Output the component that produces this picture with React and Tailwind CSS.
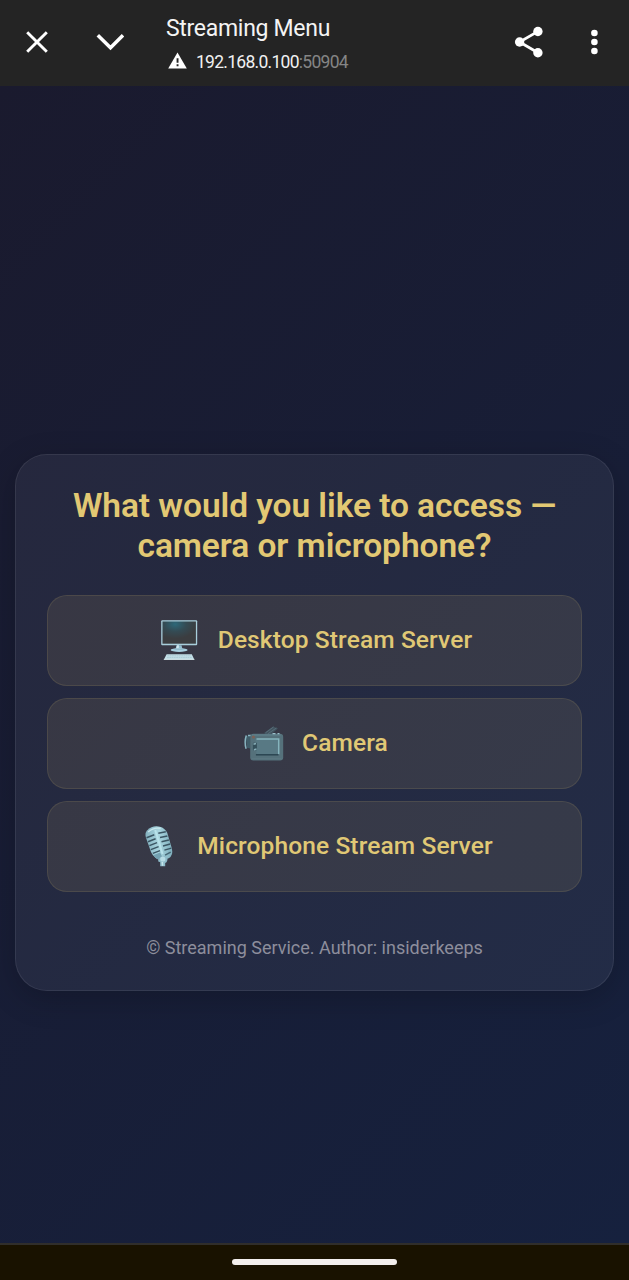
import React from "react";

function CloseIcon() {
  return (
    <svg width="22" height="22" viewBox="0 0 22 22" fill="none" stroke="#fff" strokeWidth="2.9">
      <path d="M1.2 1.2 20.8 20.8M20.8 1.2 1.2 20.8" />
    </svg>
  );
}

function ChevronIcon() {
  return (
    <svg width="28" height="18" viewBox="0 0 28 18" fill="none" stroke="#fff" strokeWidth="3.5">
      <path d="M1.8 2.2 14.5 14.7 27 2.2" />
    </svg>
  );
}

function WarningIcon() {
  return (
    <svg className="mb-[3px]" width="19" height="17" viewBox="0 0 19 17">
      <path d="M9.5 0.5 18.8 16.5H.2Z" fill="#fff" />
      <path d="M8.6 6.3h1.9v4.4H8.6zM8.6 12.2h1.9v2H8.6z" fill="#242424" />
    </svg>
  );
}

function ShareIcon() {
  return (
    <svg width="30" height="32" viewBox="0 0 30 32" fill="#fff">
      <path d="M24 5.4 5.6 16 24 26.7" fill="none" stroke="#fff" strokeWidth="2.8" />
      <circle cx="23.9" cy="5.5" r="4.7" />
      <circle cx="5.6" cy="16" r="4.7" />
      <circle cx="23.9" cy="26.7" r="4.7" />
    </svg>
  );
}

function MoreIcon() {
  return (
    <svg width="8" height="26" viewBox="0 0 8 26" fill="#fff">
      <circle cx="4.4" cy="4" r="3.3" />
      <circle cx="4.4" cy="13" r="3.3" />
      <circle cx="4.4" cy="22" r="3.3" />
    </svg>
  );
}

function DesktopIcon() {
  return (
    <svg className="mb-[1px]" width="42" height="42" viewBox="0 0 42 42">
      <defs>
        <radialGradient id="screen" cx="0.38" cy="0.12" r="0.65">
          <stop offset="0" stopColor="#2d6879" />
          <stop offset="0.5" stopColor="#344b54" />
          <stop offset="1" stopColor="#3b3d40" />
        </radialGradient>
      </defs>
      <rect x="2.2" y="1.2" width="36" height="25" rx="1" fill="#a8cedb" />
      <rect x="3.5" y="2.5" width="33.4" height="22.2" fill="url(#screen)" />
      <path d="M17.5 26.2h5l.8 3.3h-6.6z" fill="#92bed0" />
      <path d="M18 26.2h2l-.3 3.3h-2.4z" fill="#d2e9f0" />
      <ellipse cx="20.1" cy="31" rx="8.5" ry="1.9" fill="#a7cfdf" />
      <path d="M14 30.7q6-1.8 12 0z" fill="#8ab5c6" />
      <path d="M7.6 35.2h25.2l2.6 5.5H4.8z" fill="#c3dfe7" />
      <path d="M8.4 36.8h23.8M8 38.6h25" stroke="#a4c4cf" strokeWidth=".7" strokeDasharray="1.8 .5" />
      <path d="M4.8 40.4h30.6" stroke="#dcebef" strokeWidth=".8" />
    </svg>
  );
}

function CameraIcon() {
  return (
    <svg className="mt-[1px]" width="42" height="42" viewBox="0 0 42 42">
      <path d="m21 10 9-6.5 5 2-9 7.4z" fill="#42535f" />
      <path d="m22.5 9.8 8-5.8M25 10.7l8.4-5.7" stroke="#566d78" strokeWidth="1" />
      <path d="M2.5 12.8h4.9V25.5L4 24.8z" fill="#405d69" />
      <path d="M3.3 12.4q-2.2 6.4-.2 13.4M5 12.4h3" stroke="#88b4c0" strokeWidth="1.5" fill="none" />
      <rect x="7.2" y="10.8" width="33" height="26.6" rx="3.2" fill="#55717b" />
      <path d="M9 12h28.6" stroke="#628490" />
      <path d="M12.5 16h22.6v15.5H13.5z" fill="#587984" />
      <path d="M13.5 15.9h22.2v15.3" fill="none" stroke="#85b4bd" strokeWidth="1.5" />
      <path d="M35.5 31.8H12.9" fill="none" stroke="#28424e" strokeWidth="1.4" />
      <path d="M9.9 19.8h4v7.4h-4z" fill="#34505b" />
      <path d="m10.5 21.2 2.5-.8M10.9 26.8l2.6-.7" stroke="#88aeb7" strokeWidth="1.6" />
      <circle cx="10.5" cy="14" r="1.6" fill="#7c6258" />
      <path d="M29.5 10.6h3M34.5 10.6h2" stroke="#9bc1cb" strokeWidth="1.4" />
      <path d="M8.5 35.8h30" stroke="#5d7a84" />
    </svg>
  );
}

function MicrophoneIcon() {
  return (
    <svg className="mb-[1px]" width="42" height="42" viewBox="0 0 42 42">
      <defs>
        <linearGradient id="metal" x1="0" x2="1">
          <stop offset="0" stopColor="#83b1bf" />
          <stop offset="0.5" stopColor="#a9d5df" />
          <stop offset="1" stopColor="#7eaebc" />
        </linearGradient>
      </defs>
      <g transform="translate(0.8 0)">
        <path d="M8.2 5.4Q13.5.2 21 1.7q5.2 1.2 7.5 6.3l4.6 15.5q1.6 7-3.2 9.8l-6.5 2.2Q15.3 34 12.2 27L7.1 12.5Q5.8 8 8.2 5.4z" fill="url(#metal)" />
        <path d="m7.7 12.8 7.8-3.1M9.2 16.8l7.6-3M10.6 20.6l7.6-3M12 24.6l7.8-3M14 28.4l7.2-2.8M19.5 8.3l7.5-1.6M21.2 12.6l7.4-1.7M22.7 16.7l7.4-1.8M24.2 20.9l7.2-1.9M25.6 25.1l7-2" stroke="#3a5563" strokeWidth="1.5" />
        <path d="m16.4 5 7.4 24" stroke="#b8e2ea" strokeWidth="2" />
        <path d="M9.4 7.1q5.4-4.9 12.4-3.7" fill="none" stroke="#c8e7ed" strokeWidth="1.4" />
        <path d="m14.5 30.2 6.8-2.6 3 6.2-2.7 1.3q-4.5-1-7.1-4.9z" fill="#74a2b2" />
        <path d="m26.3 30.2 5.6-3" stroke="#446573" strokeWidth="1.5" />
        <path d="M19.8 34.3q4-5.5 8-2.5 1.8 2.6-.1 5.5l-1.3.8v3.2h-5v-4l-2.2-1z" fill="#8ebbc9" />
        <circle cx="24" cy="34" r="2.6" fill="#b7dce5" />
        <path d="m23.5 37 .3 3.8" stroke="#c5e5eb" strokeWidth="1.5" />
      </g>
    </svg>
  );
}

function MenuButton({ icon, label }) {
  return (
    <button className="flex h-[91px] w-full items-center justify-center gap-[17px] rounded-[20px] border border-[#e2c873]/12 bg-[#e2c873]/10 pl-[2px] font-['Roboto',sans-serif] text-[24.5px] font-medium text-[#e0c875]">
      <span className="shrink-0">{icon}</span>
      <span className="whitespace-nowrap pb-[1px] tracking-[0.12px]">{label}</span>
    </button>
  );
}

export default function App() {
  return (
    <div className="flex h-[1280px] w-full flex-col overflow-hidden font-['Roboto',sans-serif]">
      <header className="flex h-[86px] shrink-0 items-start bg-[#242424] pl-[26px] pr-[31px]">
        <div className="flex h-[84px] items-center gap-12">
          <CloseIcon />
          <ChevronIcon />
        </div>
        <div className="ml-[42px] flex flex-col pt-[15px]">
          <h1 className="whitespace-nowrap text-[23px] leading-7 tracking-[-0.3px] text-[#f4f4f4]">Streaming Menu</h1>
          <div className="mt-[7px] flex items-center gap-[9px] pl-[2px]">
            <WarningIcon />
            <p className="whitespace-nowrap text-[17.5px] leading-6 tracking-[-0.72px] text-[#f1f1f1]">
              192.168.0.100<span className="text-[#858585]">:50904</span>
            </p>
          </div>
        </div>
        <div className="ml-auto flex h-[84px] items-center gap-[46px]">
          <ShareIcon />
          <MoreIcon />
        </div>
      </header>
      <main className="flex flex-1 flex-col items-center bg-linear-[135deg,#1a1a2e,#16213e] px-[15px] pt-[368px]">
        <section className="flex h-[537px] w-full flex-col items-center rounded-[32px] border border-white/8 bg-[#f0f0ff]/6 px-[31px] pt-[31px] shadow-[0_8px_32px_rgba(0,0,0,0.2)]">
          <h2 className="whitespace-nowrap text-center text-[33.5px] font-semibold leading-[39.5px] tracking-[-0.06px] text-[#e2c873]">
            What would you like to access —<br />camera or microphone?
          </h2>
          <nav className="mt-[30px] flex w-full flex-col gap-[12px]">
            <MenuButton icon={<DesktopIcon />} label="Desktop Stream Server" />
            <MenuButton icon={<CameraIcon />} label="Camera" />
            <MenuButton icon={<MicrophoneIcon />} label="Microphone Stream Server" />
          </nav>
          <p className="mt-[44px] whitespace-nowrap text-[18px] leading-6 text-[#8d8e9c]">© Streaming Service. Author: insiderkeeps</p>
        </section>
      </main>
      <footer className="flex h-[37px] shrink-0 items-center justify-center border-t-2 border-[#302e2b] bg-[#191200] pb-[2px]">
        <div className="h-[6px] w-[165px] rounded-full bg-[#f3efed]" />
      </footer>
    </div>
  );
}
